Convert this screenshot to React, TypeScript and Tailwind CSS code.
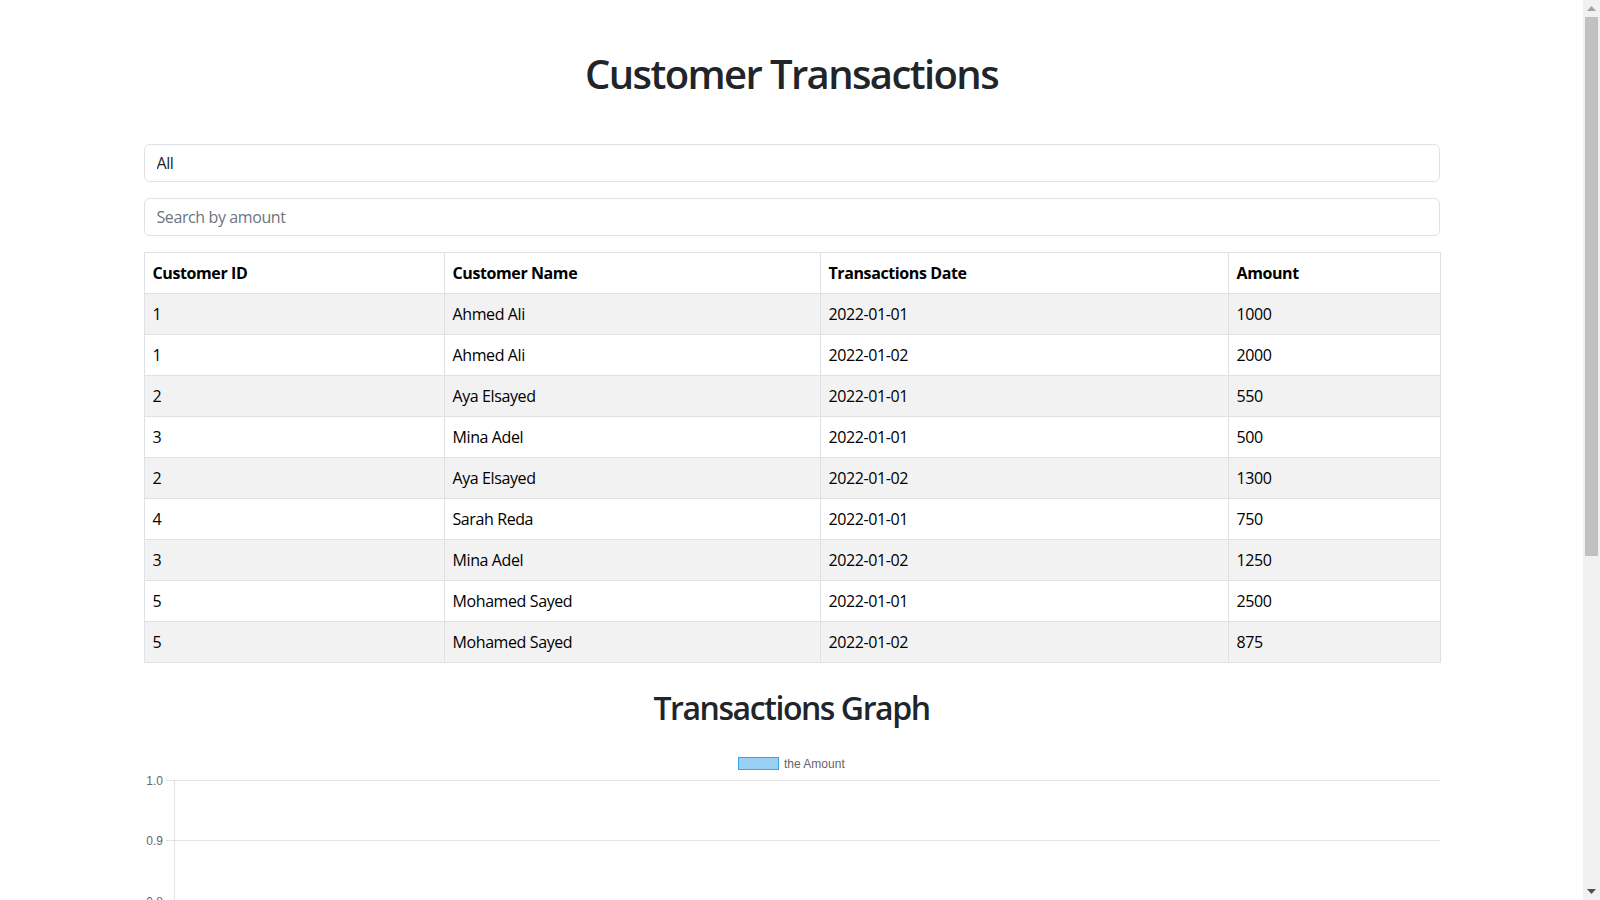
import { useState } from "react";

type Txn = { id: number; name: string; date: string; amount: number };

const transactions: Txn[] = [
  { id: 1, name: "Ahmed Ali", date: "2022-01-01", amount: 1000 },
  { id: 1, name: "Ahmed Ali", date: "2022-01-02", amount: 2000 },
  { id: 2, name: "Aya Elsayed", date: "2022-01-01", amount: 550 },
  { id: 3, name: "Mina Adel", date: "2022-01-01", amount: 500 },
  { id: 2, name: "Aya Elsayed", date: "2022-01-02", amount: 1300 },
  { id: 4, name: "Sarah Reda", date: "2022-01-01", amount: 750 },
  { id: 3, name: "Mina Adel", date: "2022-01-02", amount: 1250 },
  { id: 5, name: "Mohamed Sayed", date: "2022-01-01", amount: 2500 },
  { id: 5, name: "Mohamed Sayed", date: "2022-01-02", amount: 875 },
];

const ticks = [1.0, 0.9, 0.8, 0.7, 0.6, 0.5, 0.4, 0.3, 0.2, 0.1, 0.0];

const Graph = () => {
  const top = 33;
  const step = 60.3;
  return (
    <svg width="1296" height="648" viewBox="0 0 1296 648" className="block">
      <rect x="594.5" y="10.5" width="40" height="12" fill="rgba(54,162,235,0.5)" stroke="rgb(54,162,235)" strokeWidth="1" />
      <text x="640" y="20.5" fontSize="12" fill="#666" fontFamily="'Liberation Sans', Arial, sans-serif">
        the Amount
      </text>
      {ticks.map((t, i) => {
        const y = Math.round(top + i * step) + 0.5;
        return (
          <g key={t}>
            <line x1="22" x2="1296" y1={y} y2={y} stroke="rgba(0,0,0,0.1)" strokeWidth="1" />
            <text
              x="19"
              y={y + 4}
              fontSize="12"
              fill="#666"
              textAnchor="end"
              fontFamily="'Liberation Sans', Arial, sans-serif"
            >
              {t.toFixed(1)}
            </text>
          </g>
        );
      })}
      <line x1="30.5" x2="30.5" y1={top} y2={top + 10 * step + 8} stroke="rgba(0,0,0,0.1)" strokeWidth="1" />
    </svg>
  );
};

// page scrollbar as it shows in the screenshot
const ScrollBar = () => (
  <div className="w-[17px] h-screen bg-[#f1f1f1] flex flex-col items-center shrink-0">
    <div className="h-[17px] flex items-center justify-center">
      <svg width="9" height="5" viewBox="0 0 9 5">
        <path d="M0 5 L4.5 0 L9 5 Z" fill="#a3a3a3" />
      </svg>
    </div>
    <div className="w-[13px] h-[539px] bg-[#c1c1c1]" />
    <div className="flex-1" />
    <div className="h-[17px] flex items-center justify-center">
      <svg width="9" height="5" viewBox="0 0 9 5">
        <path d="M0 0 L9 0 L4.5 5 Z" fill="#505050" />
      </svg>
    </div>
  </div>
);

const App = () => {
  const [filter, setFilter] = useState("All");
  const [amount, setAmount] = useState("");

  return (
    <div
      className="flex h-screen overflow-hidden bg-white text-[#212529]"
      style={{ fontFamily: "'Open Sans', 'Noto Sans', sans-serif" }}
    >
      <main className="flex-1 overflow-y-auto">
        <div className="w-[1296px] mx-auto pb-[50px]">
          <h1 className="text-center text-[40px] leading-[48px] font-semibold pt-[50px] mb-[46px] tracking-[-0.04em]">
            Customer Transactions
          </h1>
          <input
            value={filter}
            onChange={(e) => setFilter(e.target.value)}
            className="block w-full h-[38px] px-3 border border-[#dee2e6] rounded-[6px] text-base text-[#212529] mb-4 outline-none tracking-[-0.025em]"
          />
          <input
            value={amount}
            onChange={(e) => setAmount(e.target.value)}
            placeholder="Search by amount"
            className="block w-full h-[38px] px-3 border border-[#dee2e6] rounded-[6px] text-base text-[#212529] placeholder:text-[#6c757d] mb-4 outline-none tracking-[-0.025em]"
          />
          <table className="w-full border-collapse text-base text-black table-fixed tracking-[-0.025em]">
            <colgroup>
              <col className="w-[300px]" />
              <col className="w-[376px]" />
              <col className="w-[408px]" />
              <col className="w-[212px]" />
            </colgroup>
            <thead>
              <tr>
                <th className="border border-[#dee2e6] px-2 py-2 leading-6 text-left font-bold">Customer ID</th>
                <th className="border border-[#dee2e6] px-2 py-2 leading-6 text-left font-bold">Customer Name</th>
                <th className="border border-[#dee2e6] px-2 py-2 leading-6 text-left font-bold">Transactions Date</th>
                <th className="border border-[#dee2e6] px-2 py-2 leading-6 text-left font-bold">Amount</th>
              </tr>
            </thead>
            <tbody>
              {transactions.map((t, i) => (
                <tr key={i} className={i % 2 === 0 ? "bg-[#f2f2f2]" : "bg-white"}>
                  <td className="border border-[#dee2e6] px-2 py-2 leading-6">{t.id}</td>
                  <td className="border border-[#dee2e6] px-2 py-2 leading-6">{t.name}</td>
                  <td className="border border-[#dee2e6] px-2 py-2 leading-6">{t.date}</td>
                  <td className="border border-[#dee2e6] px-2 py-2 leading-6">{t.amount}</td>
                </tr>
              ))}
            </tbody>
          </table>
          <h2 className="text-center text-[32px] leading-[38px] font-semibold mt-[26px] mb-[20px] tracking-[-0.045em]">
            Transactions Graph
          </h2>
          <Graph />
        </div>
      </main>
      <ScrollBar />
    </div>
  );
};

export default App;
